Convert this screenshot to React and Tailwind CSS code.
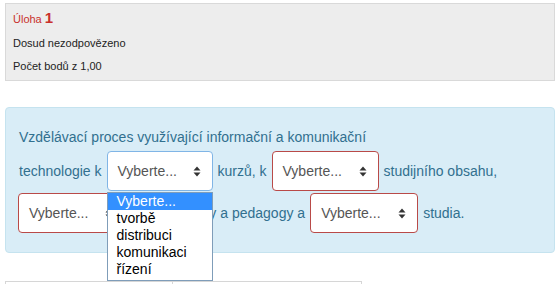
import React from 'react'

function Arrows() {
  return (
    <svg width="8" height="11" viewBox="0 0 8 11" className="shrink-0">
      <path d="M0.5 4.5 L4 0.5 L7.5 4.5 Z" fill="#333" />
      <path d="M0.5 6.5 L4 10.5 L7.5 6.5 Z" fill="#333" />
    </svg>
  )
}

function Select({ border = 'border-[#b94a48]', w = 'w-[107px]', children }) {
  return (
    <div className="relative shrink-0">
      <div
        className={`flex items-center justify-between h-[40px] ${w} pl-[10px] pr-[11px] bg-white border ${border} rounded-[4px] text-[14px] text-[#555]`}
      >
        <span>Vyberte...</span>
        <Arrows />
      </div>
      {children}
    </div>
  )
}

const options = ['Vyberte...', 'tvorbě', 'distribuci', 'komunikaci', 'řízení']

export default function App() {
  return (
    <div className="w-[559px] h-[284px] overflow-hidden bg-white font-['Liberation_Sans',Arial,sans-serif]">
      {/* info */}
      <div className="ml-[5px] mt-[3px] w-[550px] h-[78px] border border-[#d9d9d9] bg-[#ededed] pl-[7px] pt-[4px]">
        <div className="h-[20px] leading-[20px] text-[#c9302c] text-[11px]">
          Úloha <span className="text-[15px] font-bold">1</span>
        </div>
        <div className="mt-[7px] h-[16px] leading-[16px] text-[11px] text-[#222]">Dosud nezodpovězeno</div>
        <div className="mt-[7px] h-[16px] leading-[16px] text-[11px] text-[#222]">Počet bodů z 1,00</div>
      </div>

      {/* question */}
      <div className="ml-[5px] mt-[26px] w-[550px] h-[146px] border border-[#c5e3ef] bg-[#d9edf7] rounded-[4px] pl-[13px] pt-[19px] text-[14px] text-[#31708f]">
        <div className="h-[20px] leading-[20px]">
          Vzdělávací proces využívající informační a komunikační
        </div>
        <div className="mt-[4px] flex items-center gap-[5px] h-[40px] relative z-10">
          <span>technologie k</span>
          <Select border="border-[#80b5e6]" w="w-[106px]">
            <div className="absolute left-0 top-[41px] w-[106px] h-[89px] bg-white border border-[#7f9db9] text-[14px] text-black leading-[17px]">
              {options.map((o, i) => (
                <div
                  key={o}
                  className={i === 0 ? 'pl-[9px] bg-[#3390ff] text-white' : 'pl-[9px]'}
                >
                  {o}
                </div>
              ))}
            </div>
          </Select>
          <span>kurzů, k</span>
          <Select />
          <span>studijního obsahu,</span>
        </div>
        <div className="mt-[2px] flex items-center gap-[5px] h-[40px] -ml-[1px]">
          <Select />
          <span>mezi studenty a pedagogy a</span>
          <Select w="w-[108px]" />
          <span>studia.</span>
        </div>
      </div>

      {/* bottom */}
      <div className="ml-[5px] mt-[28px] flex">
        <div className="w-[167px] h-[20px] border-t border-l border-[#d6d6d6]" />
        <div className="w-[190px] h-[20px] border-t border-l border-r border-[#d6d6d6]" />
      </div>
    </div>
  )
}
